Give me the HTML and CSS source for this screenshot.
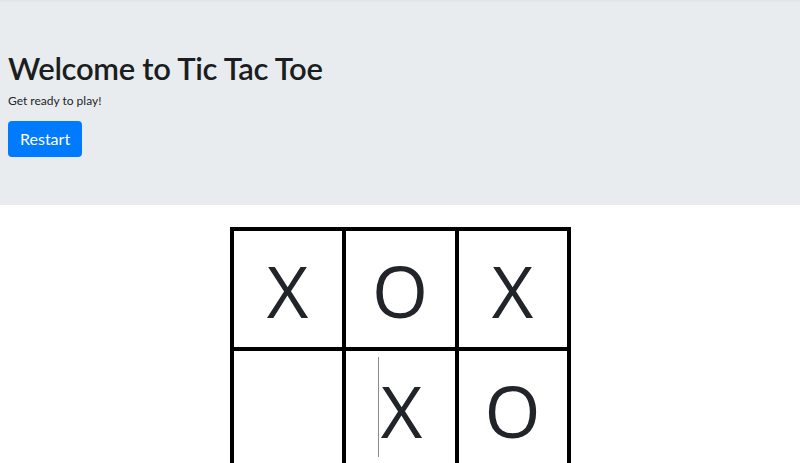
FILE: index.html
```html
<!DOCTYPE html>
<html lang="en">
<head>
<meta charset="utf-8">
<title>Tic Tac Toe</title>
<link rel="stylesheet" href="styles.css">
</head>
<body>
<header class="jumbotron">
  <h1 class="title">Welcome to Tic Tac Toe</h1>
  <p class="lead">Get ready to play!</p>
  <button class="btn-restart" type="button">Restart</button>
</header>
<main class="board">
  <div class="cell"><span class="mark">X</span></div>
  <div class="cell"><span class="mark">O</span></div>
  <div class="cell"><span class="mark">X</span></div>
  <div class="cell"></div>
  <div class="cell"><span class="caret"></span><span class="mark">X</span></div>
  <div class="cell"><span class="mark">O</span></div>
  <div class="cell"></div>
  <div class="cell"></div>
  <div class="cell"></div>
</main>
</body>
</html>
```
FILE: styles.css
```css
html, body {
  margin: 0;
  padding: 0;
  background: #ffffff;
  font-family: "Open Sans", "Noto Sans", sans-serif;
  color: #212529;
  overflow: hidden;
}

.jumbotron {
  background: #e9ecef;
  border-top: 2px solid #e2e5e9;
  padding: 47px 8px 48px 8px;
  font-family: Lato, "Open Sans", sans-serif;
}

.title {
  margin: 0;
  font-size: 31px;
  line-height: 38px;
  font-weight: 600;
  letter-spacing: -0.3px;
  color: #1b1e21;
}

.lead {
  margin: 3px 0 0 0;
  font-size: 12px;
  line-height: 21px;
}

.btn-restart {
  display: block;
  margin-top: 10px;
  height: 36px;
  padding: 0 12px;
  border: none;
  border-radius: 4px;
  background: #007bff;
  color: #ffffff;
  font-family: inherit;
  font-size: 16px;
  line-height: 24px;
}

.board {
  display: grid;
  grid-template-columns: 108px 109px 108px;
  grid-auto-rows: 116px;
  gap: 4px;
  padding: 4px;
  background: #000000;
  width: max-content;
  margin: 22px auto 0 auto;
}

.cell {
  background: #ffffff;
  display: flex;
  justify-content: center;
  align-items: flex-start;
}

.mark {
  font-size: 72px;
  line-height: 118px;
  color: #212529;
}

.caret {
  display: block;
  width: 1px;
  height: 100px;
  margin-top: 6px;
  margin-right: 2px;
  background: #8a8a8a;
}
```
